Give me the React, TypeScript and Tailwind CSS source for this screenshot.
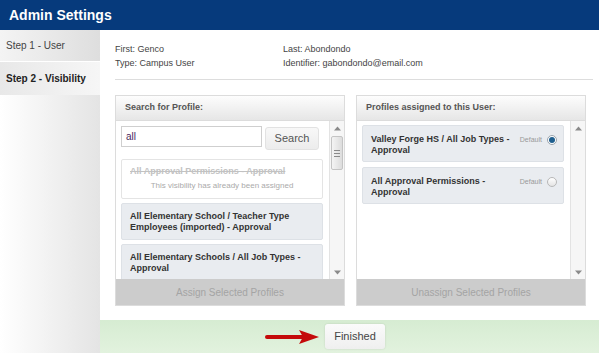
import React from 'react';

const font = { fontFamily: '"Liberation Sans", Arial, sans-serif' };

const ScrollBar: React.FC<{ thumb?: boolean }> = ({ thumb }) => (
  <div className="w-[15px] shrink-0 border-l border-[#e3e3e3] bg-[#f6f6f6] flex flex-col items-center justify-between py-[4px]">
    <div className="flex flex-col items-center w-full">
      <svg width="7" height="5" viewBox="0 0 7 5" className="mt-[1px]">
        <path d="M0 4.5 L3.5 0.5 L7 4.5 Z" fill="#8a8a8a" />
      </svg>
      {thumb && (
        <div className="mt-[5px] w-[12px] h-[34px] rounded-[2px] border border-[#c4c4c4] bg-gradient-to-r from-[#f4f4f4] to-[#dcdcdc] flex flex-col items-center justify-center gap-[2px]">
          <div className="w-[6px] h-px bg-[#8a8a8a]" />
          <div className="w-[6px] h-px bg-[#8a8a8a]" />
          <div className="w-[6px] h-px bg-[#8a8a8a]" />
        </div>
      )}
    </div>
    <svg width="7" height="5" viewBox="0 0 7 5">
      <path d="M0 0.5 L3.5 4.5 L7 0.5 Z" fill="#8a8a8a" />
    </svg>
  </div>
);

const PanelHeader: React.FC<{ title: string }> = ({ title }) => (
  <div className="h-[25px] shrink-0 flex items-center px-[9px] border-b border-[#dcdcdc] bg-gradient-to-b from-[#fdfdfd] to-[#e6e6e6] text-[9px] font-bold text-[#555]">
    {title}
  </div>
);

const BottomBar: React.FC<{ label: string }> = ({ label }) => (
  <div className="h-[26px] shrink-0 bg-[#cccccc] flex items-center justify-center text-[10px] text-[#a4a4a4]">
    {label}
  </div>
);

const ProfileItem: React.FC<{ lines: string[] }> = ({ lines }) => (
  <div className="shrink-0 rounded-[2px] border border-[#dde1e6] bg-[#e9ecf0] px-[8px] pt-[7px] pb-[6px] text-[9px] leading-[11px] font-bold text-[#333]">
    {lines.map((l) => (
      <div key={l}>{l}</div>
    ))}
  </div>
);

const AssignedItem: React.FC<{ lines: string[]; selected?: boolean }> = ({ lines, selected }) => (
  <div className="h-[37px] rounded-[2px] border border-[#dde1e6] bg-[#e9ecf0] pl-[8px] pr-[6px] pt-[8px] flex justify-between">
    <div className="text-[9px] leading-[11px] font-bold text-[#333]">
      {lines.map((l) => (
        <div key={l}>{l}</div>
      ))}
    </div>
    <div className="flex items-start gap-[5px] pt-[1px]">
      <span className="text-[7px] leading-[10px] text-[#999]">Default</span>
      {selected ? (
        <div className="w-[10px] h-[10px] rounded-full border border-[#9aa4ad] bg-white flex items-center justify-center">
          <div className="w-[6px] h-[6px] rounded-full bg-[#1f5f8f]" />
        </div>
      ) : (
        <div className="w-[10px] h-[10px] rounded-full border border-[#b8b8b8] bg-gradient-to-b from-white to-[#e4e4e4]" />
      )}
    </div>
  </div>
);

export default function App() {
  return (
    <div className="w-[599px] h-[353px] overflow-hidden bg-white flex flex-col" style={font}>
      <div className="h-[30px] shrink-0 bg-[#063a7c] flex items-center pl-[9px] text-white text-[14px] font-bold">
        Admin Settings
      </div>

      <div className="flex flex-1 min-h-0">
        {/* sidebar */}
        <div className="w-[100px] shrink-0 flex flex-col">
          <div className="h-[32px] flex items-center pl-[6px] text-[10px] text-[#444] bg-gradient-to-r from-[#f4f4f4] to-[#dedede] border-b border-white">
            Step 1 - User
          </div>
          <div className="h-[33px] flex items-center pl-[6px] text-[10px] font-bold text-[#222] bg-gradient-to-r from-[#e8e8e8] to-[#f6f6f6]">
            Step 2 - Visibility
          </div>
          <div className="flex-1 bg-gradient-to-r from-white to-[#e4e4e4]" />
        </div>

        {/* content */}
        <div className="flex-1 flex flex-col">
          <div className="px-[15px] pr-[7px]">
            <div className="pt-[12px] grid grid-cols-[168px_1fr] text-[9px] leading-[14px] text-[#444]">
              <div>First: Genco</div>
              <div>Last: Abondondo</div>
              <div>Type: Campus User</div>
              <div>Identifier: gabondondo@email.com</div>
            </div>
            <div className="mt-[9px] h-px bg-[#dddddd]" />
          </div>

          <div className="mt-[15px] pl-[15px] pr-[14px] flex gap-[11px]">
            {/* left panel */}
            <div className="w-[230px] h-[211px] border border-[#dcdcdc] flex flex-col">
              <PanelHeader title="Search for Profile:" />
              <div className="flex-1 min-h-0 flex bg-white">
                <div className="flex-1 min-w-0 pl-[5px] pr-[6px] pt-[5px] flex flex-col overflow-hidden">
                  <div className="flex items-start gap-[3px]">
                    <div className="w-[141px] h-[21px] border border-[#cfcfcf] bg-white flex items-center pl-[4px] text-[10px] text-[#4a1f5e]">
                      all
                    </div>
                    <div className="w-[54px] h-[23px] mt-[1px] rounded-[3px] border border-[#e2e2e2] bg-gradient-to-b from-[#f8f8f8] to-[#ececec] flex items-center justify-center text-[11px] text-[#555]">
                      Search
                    </div>
                  </div>
                  <div className="mt-[9px] flex flex-col gap-[4px]">
                    <div className="h-[40px] shrink-0 rounded-[2px] border border-[#e4e4e4] bg-white px-[8px] pt-[6px]">
                      <div className="text-[9px] leading-[11px] font-bold text-[#c2c2c2] line-through">
                        All Approval Permissions - Approval
                      </div>
                      <div className="mt-[4px] text-center text-[8px] leading-[10px] text-[#aaa]">
                        This visibility has already been assigned
                      </div>
                    </div>
                    <ProfileItem lines={['All Elementary School / Teacher Type', 'Employees (imported) - Approval']} />
                    <ProfileItem lines={['All Elementary Schools / All Job Types -', 'Approval']} />
                  </div>
                </div>
                <ScrollBar thumb />
              </div>
              <BottomBar label="Assign Selected Profiles" />
            </div>

            {/* right panel */}
            <div className="w-[230px] h-[211px] border border-[#dcdcdc] flex flex-col">
              <PanelHeader title="Profiles assigned to this User:" />
              <div className="flex-1 min-h-0 flex bg-white">
                <div className="flex-1 min-w-0 pl-[5px] pr-[6px] pt-[4px] flex flex-col gap-[5px]">
                  <AssignedItem lines={['Valley Forge HS / All Job Types -', 'Approval']} selected />
                  <AssignedItem lines={['All Approval Permissions -', 'Approval']} />
                </div>
                <ScrollBar />
              </div>
              <BottomBar label="Unassign Selected Profiles" />
            </div>
          </div>

          <div className="mt-[14px] flex-1 bg-gradient-to-b from-[#d6ecd2] to-[#e2f2de] flex items-center pl-[165px]">
            <svg width="56" height="16" viewBox="0 0 56 16" className="mr-[4px]">
              <path d="M2 8 L40 8" stroke="#c40a0a" strokeWidth="4" strokeLinecap="round" />
              <path d="M34 1 L54 8 L34 15 L38 8 Z" fill="#c40a0a" />
            </svg>
            <div className="w-[60px] h-[25px] rounded-[3px] bg-gradient-to-b from-[#fbfbfb] to-[#efefef] shadow-[0_0_2px_rgba(0,0,0,0.15)] flex items-center justify-center text-[11px] text-[#444]">
              Finished
            </div>
          </div>
        </div>
      </div>
    </div>
  );
}
